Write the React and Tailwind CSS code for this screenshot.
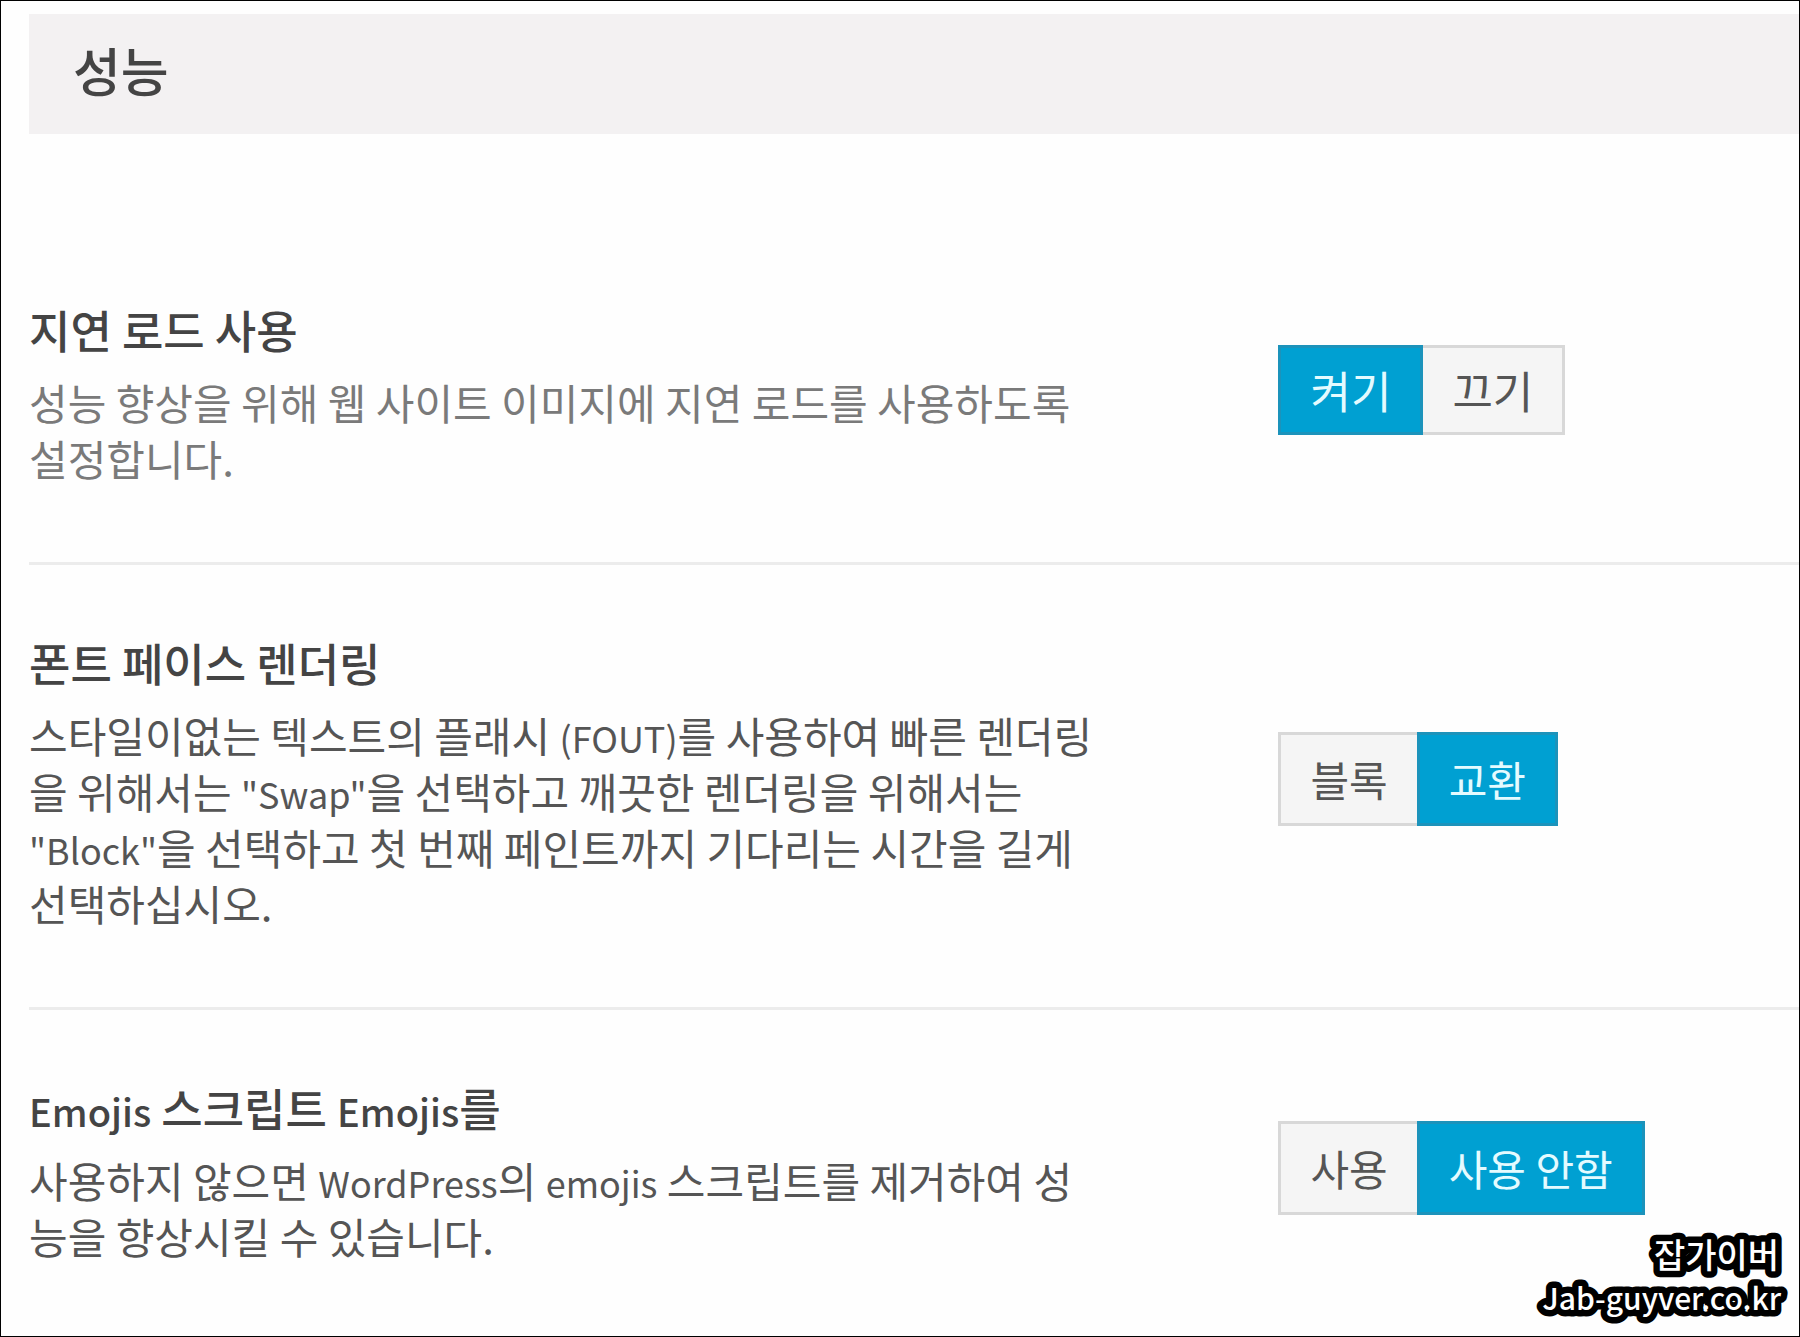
import { useState } from 'react';

const settings = [
  {
    id: 'lazy-load',
    title: '지연 로드 사용',
    description: '성능 향상을 위해 웹 사이트 이미지에 지연 로드를 사용하도록 설정합니다.',
    options: ['켜기', '끄기'],
    initial: '켜기',
    tone: 'text-[#7a7a7a]',
    size: 'py-3.5 text-[44px]'
  },
  {
    id: 'font-face',
    title: '폰트 페이스 렌더링',
    description:
      '스타일이없는 텍스트의 플래시 (FOUT)를 사용하여 빠른 렌더링을 위해서는 "Swap"을 선택하고 깨끗한 렌더링을 위해서는 "Block"을 선택하고 첫 번째 페인트까지 기다리는 시간을 길게 선택하십시오.',
    options: ['블록', '교환'],
    initial: '교환',
    tone: 'text-[#555555]',
    size: 'py-4 text-[42px]'
  },
  {
    id: 'emojis',
    title: 'Emojis 스크립트 Emojis를',
    description: '사용하지 않으면 WordPress의 emojis 스크립트를 제거하여 성능을 향상시킬 수 있습니다.',
    options: ['사용', '사용 안함'],
    initial: '사용 안함',
    tone: 'text-[#555555]',
    size: 'py-4 text-[42px]'
  }
];

// Latin words are set a little smaller than the Hangul around them.
function MixedText({ text, latinClass }) {
  return text.split(/(["(]?[A-Za-z]+[")]?)/).map((part, index) =>
    index % 2 ? (
      <span key={index} className={`leading-none ${latinClass}`}>
        {part}
      </span>
    ) : (
      part
    )
  );
}

function ButtonSet({ labelId, options, initial, size }) {
  const [selected, setSelected] = useState(initial);

  return (
    <div role="group" aria-labelledby={labelId} className="flex pb-1.5">
      {options.map((option) => (
        <button
          key={option}
          type="button"
          aria-pressed={selected === option}
          onClick={() => setSelected(option)}
          className={`border-3 px-[29px] leading-[56px] ${size} ${
            selected === option
              ? 'border-[#1c93bb] bg-[#00a0d2] text-[#e4fbff]'
              : 'border-[#d8d8d8] bg-[#f5f5f5] text-[#555555] not-first:border-l-0 not-last:border-r-0'
          }`}
        >
          {option}
        </button>
      ))}
    </div>
  );
}

function SettingRow({ setting }) {
  return (
    <section className="grid grid-cols-[12fr_5fr] items-center border-b-3 border-[#ececec] pt-17 pb-19 last:border-b-0 last:pb-16">
      <div className="pr-44">
        <h2 id={setting.id} className="text-[45px] font-medium leading-[60px] text-[#444444]">
          <MixedText text={setting.title} latinClass="text-[38px]" />
        </h2>
        <p className={`mt-3.5 text-[42px] leading-[56px] ${setting.tone}`}>
          <MixedText text={setting.description} latinClass="text-[36px]" />
        </p>
      </div>
      <ButtonSet labelId={setting.id} options={setting.options} initial={setting.initial} size={setting.size} />
    </section>
  );
}

function SiteMark() {
  return (
    <svg
      viewBox="0 0 260 100"
      className="absolute right-2 bottom-2 w-[260px] overflow-visible fill-white stroke-black stroke-[13px] font-medium [paint-order:stroke]"
      strokeLinejoin="round"
      textAnchor="end"
    >
      <text x="248" y="40" className="text-[34px]">
        잡가이버
      </text>
      <text x="250" y="82" className="text-[30px]">
        Jab-guyver.co.kr
      </text>
    </svg>
  );
}

export default function App() {
  return (
    <main className="relative min-h-screen border border-black bg-[#fefefe] pt-[13px] pl-7 font-['Noto_Sans_CJK_KR',sans-serif]">
      <header className="mb-[98px] bg-[#f3f1f2] px-11 pt-5 pb-7">
        <h1 className="text-[52px] font-medium leading-[72px] text-[#444444]">성능</h1>
      </header>
      <div>
        {settings.map((setting) => (
          <SettingRow key={setting.id} setting={setting} />
        ))}
      </div>
      <SiteMark />
    </main>
  );
}
